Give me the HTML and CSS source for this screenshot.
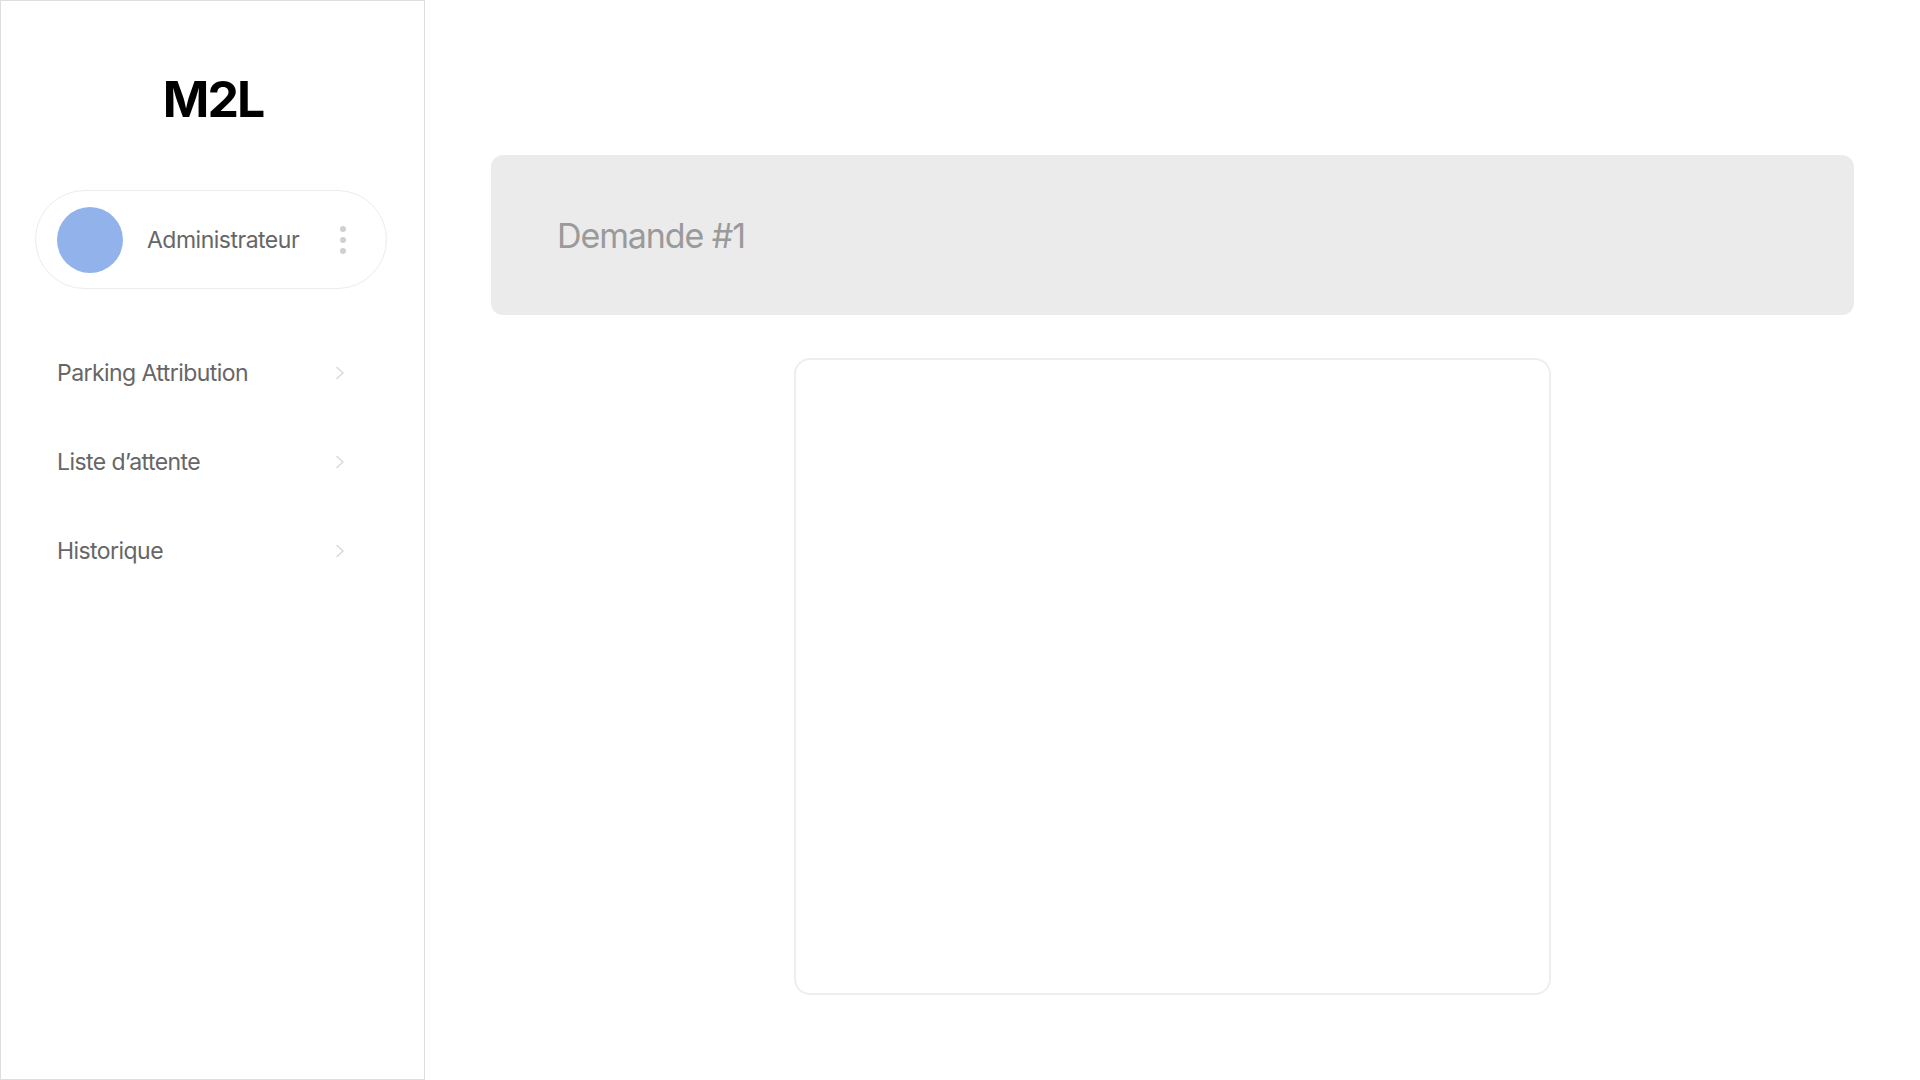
FILE: index.html
```html
<!DOCTYPE html>
<html lang="fr">
<head>
<meta charset="utf-8">
<title>M2L</title>
<link rel="stylesheet" href="styles.css">
</head>
<body>
<div class="app">
  <aside class="sidebar">
    <div class="logo">M2L</div>
    <div class="user">
      <div class="avatar"></div>
      <span class="user-name">Administrateur</span>
      <span class="kebab"><i></i><i></i><i></i></span>
    </div>
    <nav class="nav">
      <a class="nav-item" href="#"><span>Parking Attribution</span><svg class="chev" viewBox="0 0 10 14" width="10" height="14"><polyline points="2,1.5 8,7 2,12.5"/></svg></a>
      <a class="nav-item" href="#"><span>Liste d’attente</span><svg class="chev" viewBox="0 0 10 14" width="10" height="14"><polyline points="2,1.5 8,7 2,12.5"/></svg></a>
      <a class="nav-item" href="#"><span>Historique</span><svg class="chev" viewBox="0 0 10 14" width="10" height="14"><polyline points="2,1.5 8,7 2,12.5"/></svg></a>
    </nav>
  </aside>
  <main class="main">
    <header class="header">
      <h1 class="title">Demande #1</h1>
    </header>
    <section class="card"></section>
  </main>
</div>
</body>
</html>
```

FILE: styles.css
```css
* { box-sizing: border-box; }
html, body { margin: 0; padding: 0; }
body {
  font-family: Inter, "Noto Sans", "Liberation Sans", sans-serif;
  background: #ffffff;
  width: 1920px;
  height: 1080px;
  overflow: hidden;
}
.app {
  display: flex;
  width: 1920px;
  height: 1080px;
}
.sidebar {
  width: 425px;
  height: 1080px;
  flex: none;
  border: 1px solid #dedede;
  padding: 68px 0 0 34px;
  display: flex;
  flex-direction: column;
}
.logo {
  width: 356px;
  text-align: center;
  font-size: 50px;
  line-height: 60px;
  font-weight: 700;
  color: #000;
  letter-spacing: -2px;
}
.user {
  margin-top: 61px;
  width: 352px;
  height: 99px;
  border: 1px solid #ececec;
  border-radius: 50px;
  display: flex;
  align-items: center;
  padding-left: 21px;
}
.avatar {
  width: 66px;
  height: 66px;
  border-radius: 50%;
  background: #92b2ec;
  flex: none;
}
.user-name {
  margin-left: 24px;
  font-size: 23px;
  color: #666666;
  letter-spacing: -0.5px;
}
.kebab {
  margin-left: auto;
  margin-right: 40px;
  display: flex;
  flex-direction: column;
  gap: 5px;
}
.kebab i {
  display: block;
  width: 6px;
  height: 6px;
  border-radius: 50%;
  background: #d0d0d0;
}
.nav {
  margin-top: 39px;
  display: flex;
  flex-direction: column;
  padding-left: 22px;
  width: 316px;
}
.nav-item {
  display: flex;
  align-items: center;
  justify-content: space-between;
  height: 89px;
  text-decoration: none;
  color: #666666;
  font-size: 23px;
  letter-spacing: -0.56px;
}
.chev {
  fill: none;
  stroke: #dadada;
  stroke-width: 1.6;
  stroke-linecap: round;
  stroke-linejoin: round;
  margin-right: 6px;
}
.main {
  flex: 1;
  padding: 155px 66px 0;
  display: flex;
  flex-direction: column;
  align-items: center;
}
.header {
  width: 100%;
  height: 160px;
  background: #ebebeb;
  border-radius: 12px;
  display: flex;
  align-items: center;
  padding-left: 66px;
}
.title {
  margin: 0;
  font-size: 34px;
  font-weight: 400;
  color: #9a9a9a;
  letter-spacing: -1.1px;
}
.card {
  margin-top: 43px;
  width: 757px;
  height: 637px;
  border: 2px solid #eeeeee;
  border-radius: 16px;
}
```
